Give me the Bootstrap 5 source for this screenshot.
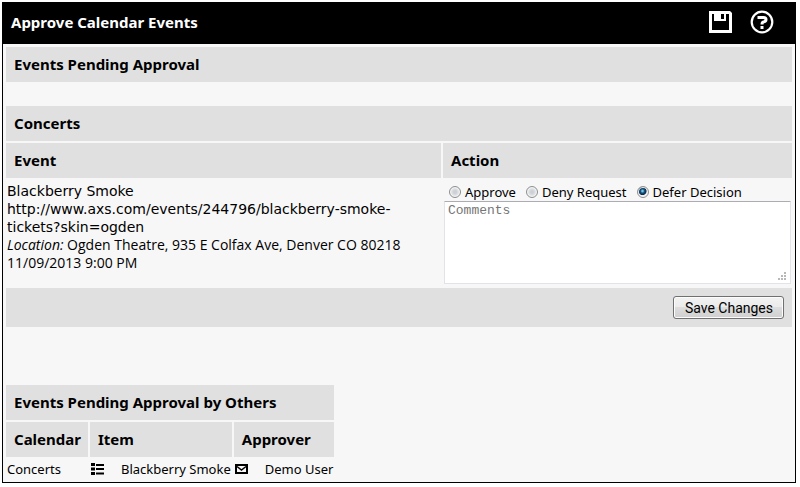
<!DOCTYPE html>
<html lang="en">
<head>
<meta charset="utf-8">
<meta name="viewport" content="width=device-width, initial-scale=1">
<title>Approve Calendar Events</title>
<link href="https://cdn.jsdelivr.net/npm/bootstrap@5.3.0/dist/css/bootstrap.min.css" rel="stylesheet">
<style>
body { font-family: "Noto Sans", Tahoma, sans-serif; font-size: 13px; line-height: 18px; color: #000; background: #fff; }
.panel { margin: 2px 4px 4px 2px; border: 1px solid #000; background: #f7f7f7; }
.panel-top { background: #000; color: #fff; height: 41px; padding: 0 21px 3px 8px; }
.panel-top h1, .grid th { font-size: 15px; line-height: 19px; font-weight: 700; }
.tool { color: #fff; background: none; line-height: 0; }
.tools { gap: 17px; }
.panel-main { padding: 1px; }
.grid { border-collapse: separate; border-spacing: 2px; }
.grid th { background: #e0e0e0; padding: 8px 7px 8px 8px; text-align: left; }
.grid td { padding: 1px; }
.event-col { width: 435px; }
.spacer { height: 20px; }
.plain { font-family: "Open Sans", Tahoma, sans-serif; font-size: 14px; }
.wide { font-family: "DejaVu Sans", Verdana, sans-serif; font-size: 14px; }
.event-text { padding-top: 1px; }
.choice input { appearance: none; width: 12px; height: 12px; margin: 0 4px 0 0; border: 1px solid #8c8e90; border-radius: 50%; background: radial-gradient(circle, #cdd1d5 0 20%, #f0f0f0 70%); box-shadow: inset 0 0 0 1px #f4f4f4; }
.choice input:checked { background: radial-gradient(circle at 45% 40%, #6fc4e8 0 8%, #16507c 25%, #0b2b4a 45%, #eee 55%); }
.choices { padding: 2px 0 0 5px; gap: 10px; }
.comments { height: 83px; margin-bottom: 1px; padding: 1px 3px; border: 1px solid #e2e3ea; border-top-color: #abadb3; border-radius: 1px; font-family: "Liberation Mono", "Courier New", monospace; font-size: 13px; line-height: 16px; background: #fff; resize: both; }
.comments::placeholder { color: #757575; }
.comments::-webkit-resizer {
  --dot: linear-gradient(#b8b8b8, #b8b8b8);
  background-image: var(--dot), var(--dot), var(--dot), var(--dot), var(--dot), var(--dot);
  background-position: 3px 10px, 6px 10px, 9px 10px, 6px 7px, 9px 7px, 9px 4px;
  background-size: 2px 2px;
  background-repeat: no-repeat;
}
.grid .foot { background: #e0e0e0; padding: 8px; }
.save { height: 23px; padding: 0 10px 0 11px; border: 1px solid #707070; border-radius: 3px; background: linear-gradient(#f2f2f2, #ebebeb 50%, #ddd 50%, #cfcfcf); box-shadow: inset 0 0 0 1px #fcfcfc; font-family: Roboto, Arial, sans-serif; font-size: 14px; line-height: 20px; color: #000; }
.others { margin-top: 54px; }
.entry { gap: 17px; }
.others a { color: #000; line-height: 0; }
</style>
<script src="https://cdn.jsdelivr.net/npm/bootstrap@5.3.0/dist/js/bootstrap.bundle.min.js" defer></script>
</head>
<body>
<div class="panel">
  <header class="panel-top d-flex align-items-center justify-content-between">
    <h1 class="m-0">Approve Calendar Events</h1>
    <div class="tools d-flex align-items-center">
      <button type="button" class="tool border-0 p-0" aria-label="Save">
        <svg width="25" height="24" viewBox="0 0 25 24" aria-hidden="true"><path fill="currentColor" fill-rule="evenodd" d="M1 1H22L24 3V23H1ZM4 4V20H21V4H18V11H6V4ZM13 4V9H16V4Z"/></svg>
      </button>
      <button type="button" class="tool border-0 p-0" aria-label="Help">
        <svg width="24" height="24" viewBox="0 0 24 24" fill="none" stroke="currentColor" aria-hidden="true"><circle cx="12" cy="12" r="10.300" stroke-width="2.200"/><path stroke-width="3" d="M7.500 7.500H13.500Q16 7.500 16 9.500Q16 11.500 14 11.800Q12 12 12 14.500M12 16V19"/></svg>
      </button>
    </div>
  </header>
  <main class="panel-main">
    <form>
      <table class="grid w-100">
        <tr><th colspan="2">Events Pending Approval</th></tr>
        <tr><td colspan="2" class="spacer"></td></tr>
        <tr><th colspan="2">Concerts</th></tr>
        <tr><th class="event-col">Event</th><th>Action</th></tr>
        <tr>
          <td class="align-top">
            <div class="event-text plain">
              <div class="wide text-break">Blackberry Smoke<br>http://www.axs.com/events/244796/blackberry-smoke-<wbr>tickets?skin=ogden</div>
              <div><em>Location:</em> Ogden Theatre, 935 E Colfax Ave, Denver CO 80218</div>
              <div>11/09/2013 9:00 PM</div>
            </div>
          </td>
          <td class="align-top">
            <div class="choices d-flex">
              <label class="choice d-flex align-items-center"><input type="radio" name="action">Approve</label>
              <label class="choice d-flex align-items-center"><input type="radio" name="action">Deny Request</label>
              <label class="choice d-flex align-items-center"><input type="radio" name="action" checked>Defer Decision</label>
            </div>
            <textarea class="comments d-block w-100" placeholder="Comments" aria-label="Comments"></textarea>
          </td>
        </tr>
        <tr><td colspan="2" class="foot"><div class="d-flex justify-content-end"><button type="button" class="save">Save Changes</button></div></td></tr>
      </table>
    </form>
    <table class="grid others">
      <tr><th colspan="3">Events Pending Approval by Others</th></tr>
      <tr><th>Calendar</th><th>Item</th><th>Approver</th></tr>
      <tr>
        <td>Concerts</td>
        <td><div class="entry d-flex align-items-center"><a href="#" aria-label="Item details"><svg width="13" height="12" viewBox="0 0 13 12" fill="currentColor" aria-hidden="true"><path d="M0 0H4V3H0ZM0 4.500H4V7.500H0ZM0 9H4V12H0ZM5 1H13V3H5ZM5 5H13V7H5ZM5 9.500H13V11.500H5Z"/></svg></a><span>Blackberry Smoke</span></div></td>
        <td><div class="entry d-flex align-items-center"><a href="#" aria-label="Email approver"><svg width="13" height="10" viewBox="0 0 13 10" fill="none" stroke="currentColor" stroke-width="2" aria-hidden="true"><path d="M1 1H12V9H1Z"/><path stroke-width="1.500" d="M2 2.500L6.500 6L11 2.500"/></svg></a><span>Demo User</span></div></td>
      </tr>
    </table>
  </main>
</div>
</body>
</html>
